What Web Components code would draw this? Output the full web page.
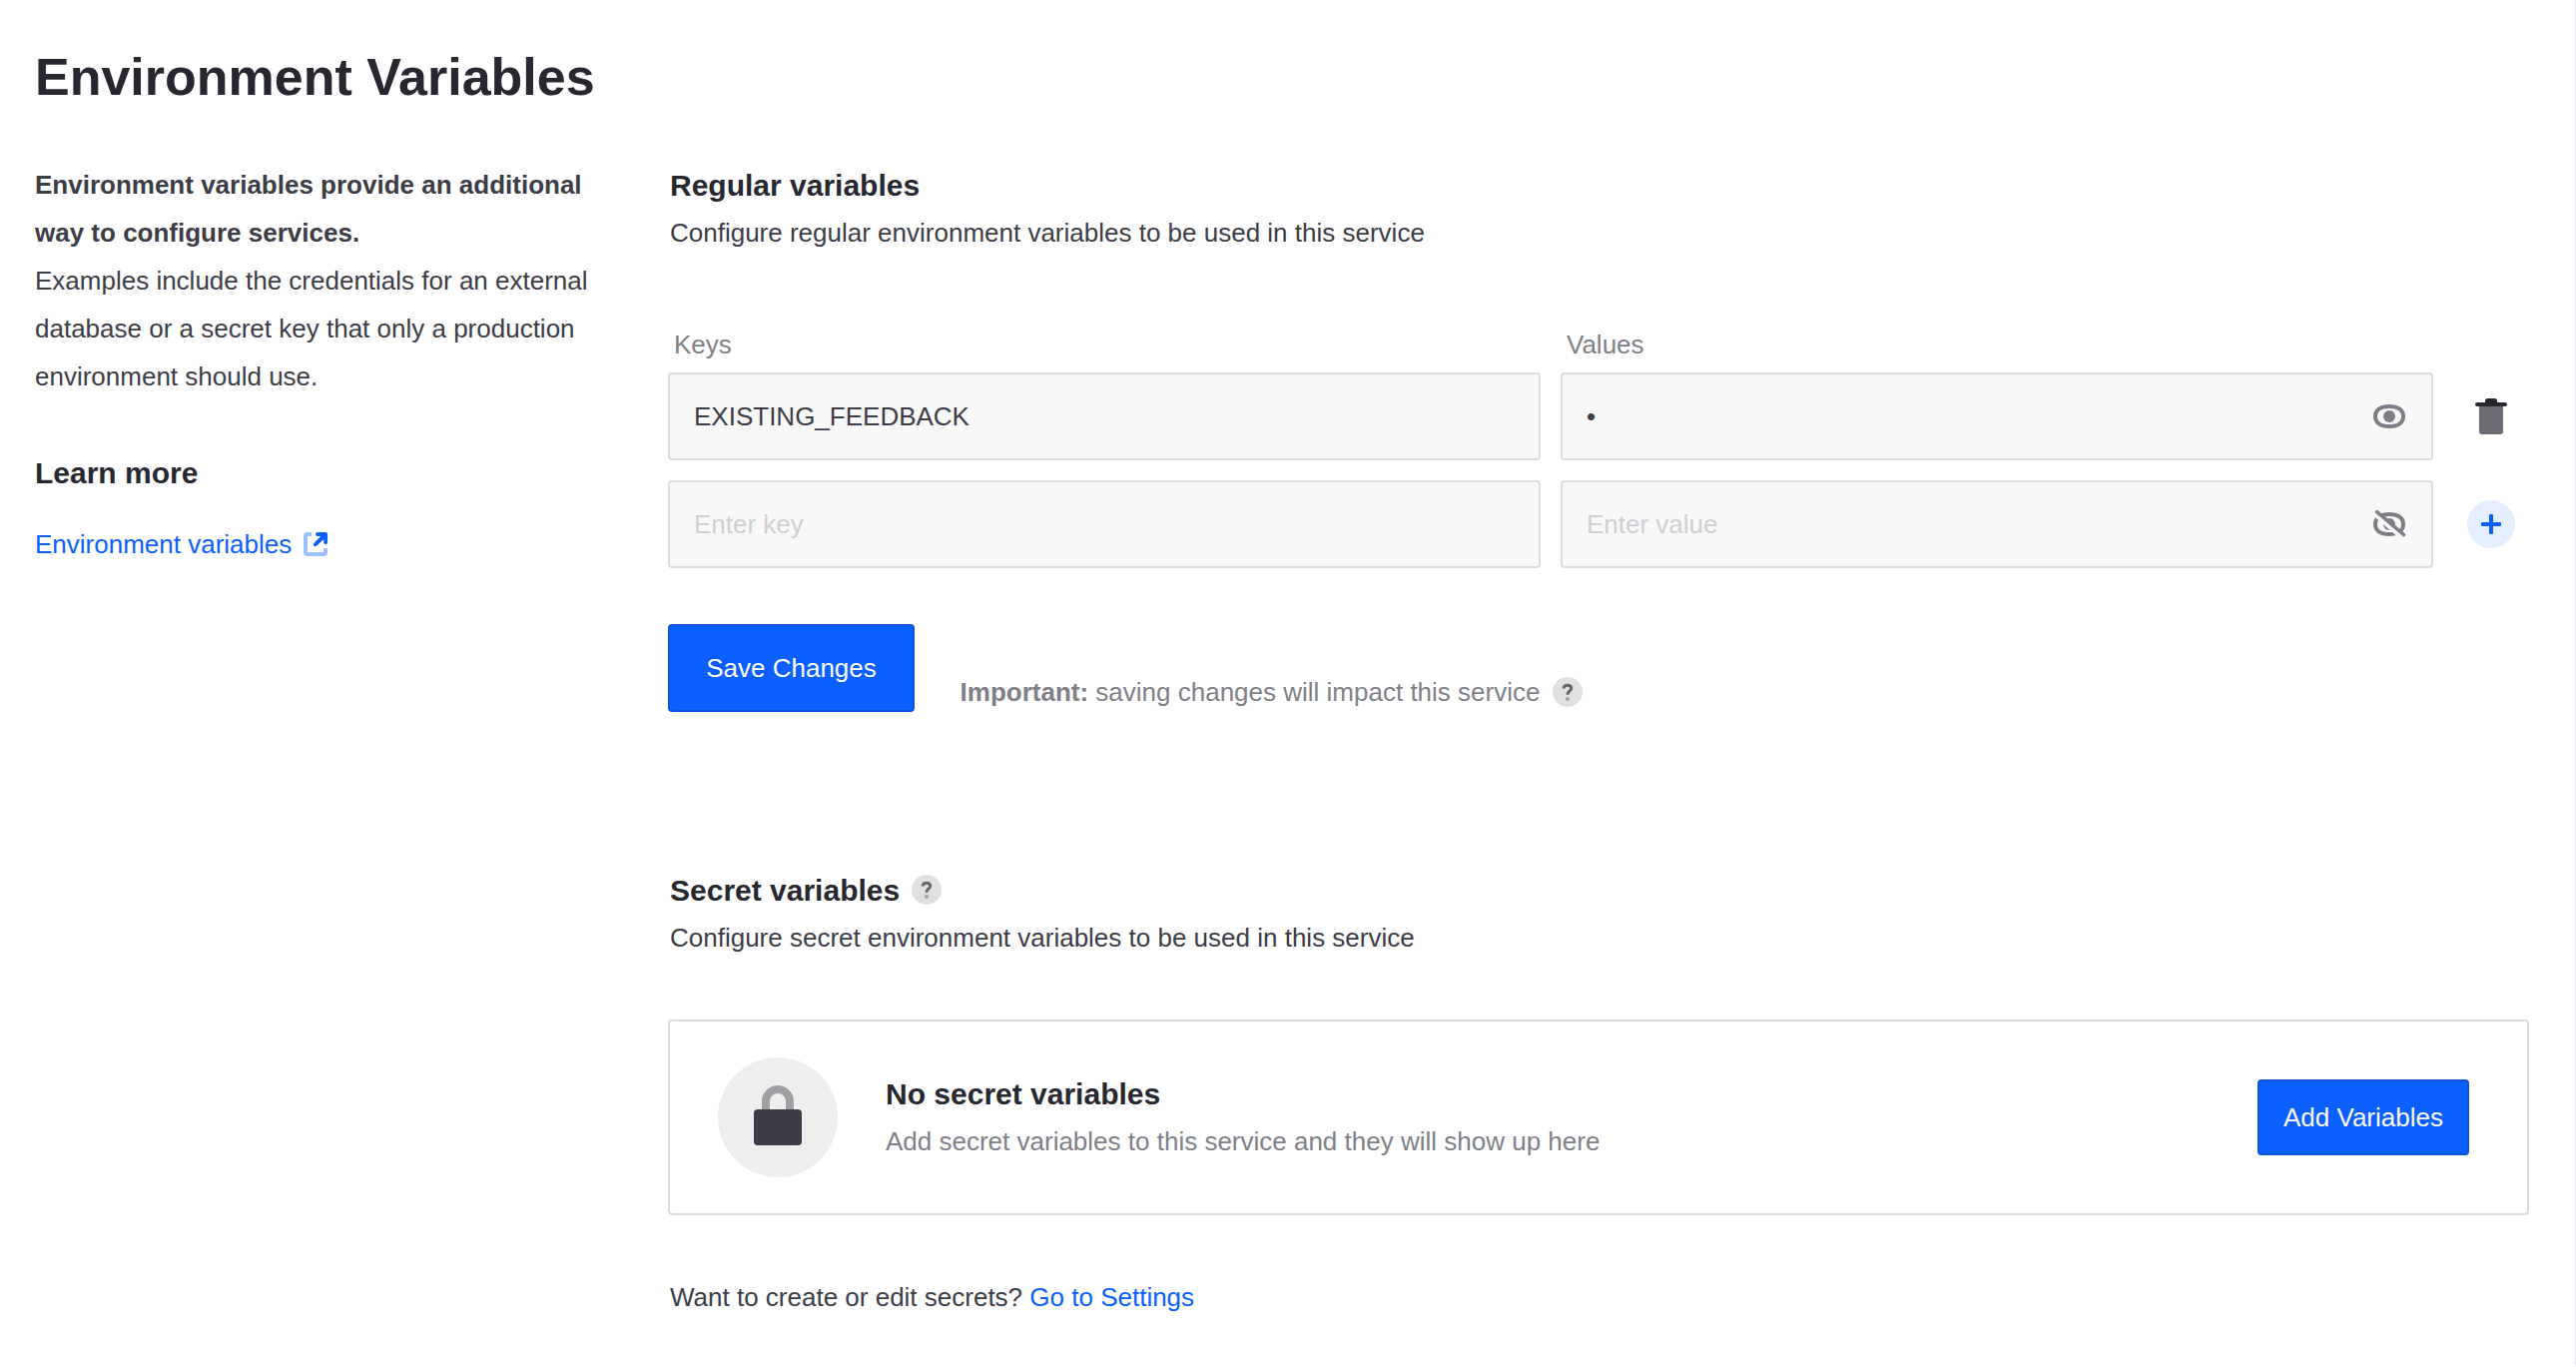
<!DOCTYPE html>
<html lang="en">
<head>
<meta charset="utf-8">
<title>Environment Variables</title>
<style>
body{margin:0;background:#fff;font-family:"Liberation Sans",Arial,sans-serif;font-size:26px;line-height:48px;color:#3c3c46}
</style>
</head>
<body>
<env-page></env-page>
<script>
const define = (name, html) => {
  const tpl = document.createElement('template');
  tpl.innerHTML = html;
  customElements.define(name, class extends HTMLElement {
    constructor() {
      super();
      this.attachShadow({ mode: 'open' }).appendChild(tpl.content.cloneNode(true));
    }
  });
};

define('help-icon', `<style>
:host{display:block;width:30px;height:30px;flex:none}
svg{display:block}
</style>
<svg width="30" height="30" viewBox="0 0 30 30" fill="none"><circle cx="15" cy="15" r="15" fill="#e0e0e0"/><path d="M11.200 11.400C11.200 9.300 12.800 8.200 15 8.200S18.700 9.400 18.700 11.300C18.700 14 15 14 15 17.800" stroke="#65656f" stroke-width="3"/><circle cx="15" cy="22" r="1.900" fill="#a0a0a6"/></svg>`);

define('eye-icon', `<style>:host{display:block}svg{display:block}</style>
<svg width="32" height="24" viewBox="0 0 32 24" fill="none"><path d="M16 2C25 2 30 5.800 30 12S25 22 16 22S2 18.200 2 12S7 2 16 2Z" stroke="#7e7e87" stroke-width="4"/><circle cx="16" cy="12" r="6" fill="#7e7e87"/></svg>`);

define('eye-off-icon', `<style>:host{display:block}svg{display:block;overflow:visible}</style>
<svg width="32" height="24" viewBox="0 0 32 24" fill="none"><path d="M16 2C25 2 30 5.800 30 12S25 22 16 22S2 18.200 2 12S7 2 16 2Z" stroke="#7e7e87" stroke-width="4"/><circle cx="16" cy="12" r="6" fill="#7e7e87"/><path d="M1 1.700L28.500 25.600" stroke="#f8f8f8" stroke-width="4"/><path d="M3.700 -.4L30.500 22.500" stroke="#7e7e87" stroke-width="3.600" stroke-linecap="round"/></svg>`);

define('trash-icon', `<style>:host{display:block}svg{display:block}</style>
<svg width="32" height="36" viewBox="0 0 32 36"><path d="M4 7H28V33Q28 36 25 36H7Q4 36 4 33Z" fill="#6a6a73"/><path d="M10 4V2.500Q10 0 12.500 0H19.500Q22 0 22 2.500V4H30Q32 4 32 6T30 8H2Q0 8 0 6T2 4Z" fill="#272730"/></svg>`);

define('add-icon', `<style>
:host{display:flex;width:48px;height:48px;border-radius:50%;background:#e5eeff;align-items:center;justify-content:center}
svg{display:block}</style>
<svg width="20" height="20" viewBox="0 0 20 20" fill="#0b5fff"><rect x="8" width="4" height="20" rx="1"/><rect y="8" width="20" height="4" rx="1"/></svg>`);

define('external-icon', `<style>:host{display:block}svg{display:block}</style>
<svg width="24" height="24" viewBox="0 0 24 24" fill="none"><path d="M8 2H4Q2 2 2 4V20Q2 22 4 22H20Q22 22 22 20V16" stroke="#9dbfff" stroke-width="4"/><path d="M14 0H22Q24 0 24 2V10.200Q24 12 22.200 12T20.200 10.200V7L13 13.800Q11.500 14.800 10.400 13.700T10.400 11L17.200 4H14Q12 4 12 2T14 0Z" fill="#0b5fff"/></svg>`);

define('lock-badge', `<style>
:host{display:flex;box-sizing:border-box;width:120px;height:120px;padding-bottom:4px;border-radius:50%;background:#eee;align-items:center;justify-content:center;flex:none}
svg{display:block}</style>
<svg width="48" height="60" viewBox="0 0 48 60" fill="none"><path d="M12 26V16A12 12 0 0 1 36 16V26" stroke="#a0a0a4" stroke-width="8"/><rect y="24" width="48" height="36" rx="4" fill="#3c3c46"/></svg>`);

define('env-field', `<style>
:host{display:flex;flex:none;box-sizing:border-box;width:874px;height:88px;border:2px solid #dcdcdc;border-radius:4px;background:#f8f8f8;padding:0 26px 0 24px;align-items:center;justify-content:space-between;color:#3c3c46}
:host([empty]){color:#cecfd3}
</style><span><slot></slot></span><slot name="icon"></slot>`);

define('env-row', `<style>
:host{display:flex;gap:20px;align-items:center}
.act{width:76px;flex:none;height:48px;display:flex;align-items:center;justify-content:center}
</style><slot></slot><div class="act"><slot name="action"></slot></div>`);

define('env-button', `<style>
:host{display:flex;box-sizing:border-box;height:var(--h,88px);width:var(--w,247px);background:#0b5fff;border:2px solid #0b54de;border-radius:4px;color:#fff;align-items:center;justify-content:center;flex:none}
</style><slot></slot>`);

define('section-head', `<style>
:host{display:block}
.t{display:flex;align-items:center;gap:12px;color:#272730;font-weight:700;font-size:30px;height:48px}
.n{padding-top:2px}
.d{height:48px;color:var(--d,#3c3c46)}
</style><div class="t"><div class="n"><slot name="title"></slot></div><slot name="help"></slot></div><div class="d"><slot></slot></div>`);

define('side-info', `<style>
:host{display:block;width:600px;padding-left:35px;box-sizing:border-box;flex:none}
p{margin:0}
h2{margin:49px 0 23px;font-size:30px;line-height:48px;color:#272730}
.l{display:flex;align-items:center;gap:12px;color:#0b5fff}
</style>
<p><b>Environment variables provide an additional<br>way to configure services.</b><br>Examples include the credentials for an external<br>database or a secret key that only a production<br>environment should use.</p>
<h2>Learn more</h2>
<div class="l"><span>Environment variables</span><external-icon></external-icon></div>`);

define('empty-card', `<style>
:host{display:flex;box-sizing:border-box;height:196px;border:2px solid #dcdcdc;border-radius:4px;padding:0 58px 0 48px;align-items:center}
section-head{flex:1;margin-left:48px;--d:#7f7f87}
env-button{--h:76px;--w:212px}
</style><lock-badge></lock-badge><section-head><span slot="title">No secret variables</span>Add secret variables to this service and they will show up here</section-head><env-button>Add Variables</env-button>`);

define('env-main', `<style>
:host{display:block;width:1864px}
.in{padding-left:2px}
.labels{display:flex;gap:20px;margin-top:64px;color:#7f7f87;line-height:48px}
.labels span{width:868px;padding-left:6px}
.rows{display:flex;flex-direction:column;gap:20px;margin-top:4px}
.save{display:flex;gap:45.6px;margin-top:56px}
.note{display:flex;align-items:center;gap:12.4px;margin-top:44px;height:48px;color:#7f7f87}
.secret{margin-top:150px}
empty-card{margin-top:58px}
.foot{margin-top:58px}
.foot span{color:#0b5fff}
</style>
<section-head class="in"><span slot="title">Regular variables</span>Configure regular environment variables to be used in this service</section-head>
<div class="labels"><span>Keys</span><span>Values</span></div>
<div class="rows">
<env-row><env-field>EXISTING_FEEDBACK</env-field><env-field>•<eye-icon slot="icon"></eye-icon></env-field><trash-icon slot="action"></trash-icon></env-row>
<env-row><env-field empty>Enter key</env-field><env-field empty>Enter value<eye-off-icon slot="icon"></eye-off-icon></env-field><add-icon slot="action"></add-icon></env-row>
</div>
<div class="save"><env-button>Save Changes</env-button><div class="note"><div><b>Important:</b> saving changes will impact this service</div><help-icon></help-icon></div></div>
<section-head class="in secret"><span slot="title">Secret variables</span><help-icon slot="help"></help-icon>Configure secret environment variables to be used in this service</section-head>
<empty-card></empty-card>
<div class="in foot">Want to create or edit secrets? <span>Go to Settings</span></div>`);

define('env-page', `<style>
:host{display:block;box-sizing:border-box;width:2580px;height:1369px;border-right:1px solid #e7e7ed;border-bottom-right-radius:4px;overflow:hidden}
h1{margin:0;padding:41px 0 0 35px;font-size:52px;line-height:72px;color:#272730}
.cols{display:flex;margin-top:48px}
env-main{margin-left:69px}
</style><h1>Environment Variables</h1><div class="cols"><side-info></side-info><env-main></env-main></div>`);
</script>
</body>
</html>
